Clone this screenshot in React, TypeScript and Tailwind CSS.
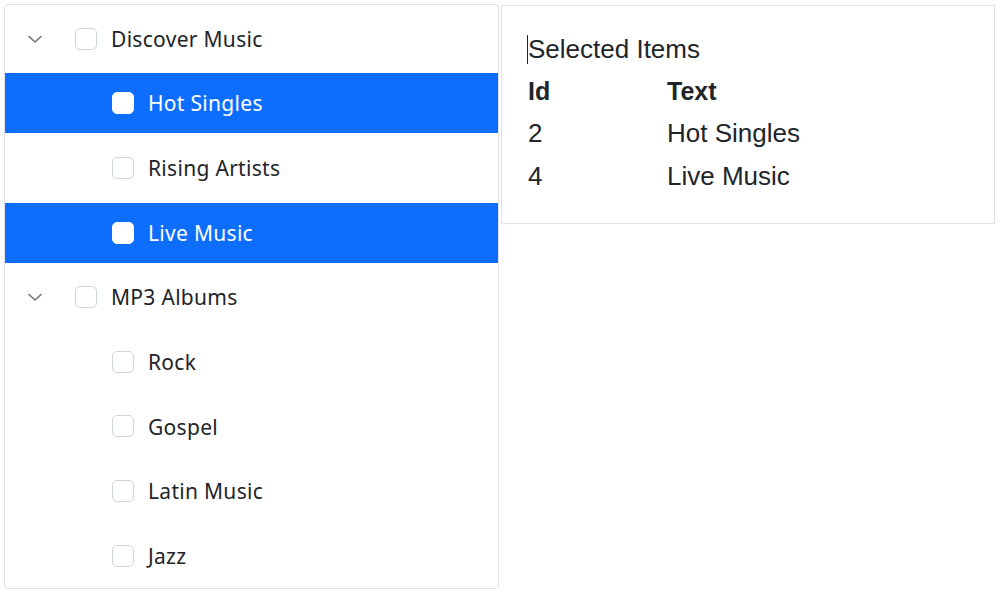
import React from "react";

type Item = { id: number; text: string; level: number; expandable?: boolean; selected?: boolean };

const items: Item[] = [
  { id: 1, text: "Discover Music", level: 0, expandable: true },
  { id: 2, text: "Hot Singles", level: 1, selected: true },
  { id: 3, text: "Rising Artists", level: 1 },
  { id: 4, text: "Live Music", level: 1, selected: true },
  { id: 5, text: "MP3 Albums", level: 0, expandable: true },
  { id: 6, text: "Rock", level: 1 },
  { id: 7, text: "Gospel", level: 1 },
  { id: 8, text: "Latin Music", level: 1 },
  { id: 9, text: "Jazz", level: 1 },
];

function Chevron() {
  return (
    <svg width="18" height="18" viewBox="0 0 18 18" fill="none">
      <path d="M3 6.5 L9 12 L15 6.5" stroke="#6c757d" strokeWidth="1.6" strokeLinecap="round" strokeLinejoin="round" />
    </svg>
  );
}

export default function App() {
  return (
    <div className="flex items-start bg-white w-[997px] h-[594px] pl-[4px] pt-[4px]">
      <div
        className="w-[495px] h-[585px] border border-[#dee2e6] rounded-[4px] flex flex-col gap-[4.65px] pt-[3.6px] overflow-hidden"
        style={{ fontFamily: '"Noto Sans", "Open Sans", sans-serif' }}
      >
        {items.map((it) => (
          <div
            key={it.id}
            className={
              "h-[60px] shrink-0 flex items-center text-[21px] tracking-[0.3px] " +
              (it.selected ? "bg-[#0d6efd] text-white" : "text-[#212529]")
            }
          >
            {it.level === 0 ? (
              <>
                <div className="w-[60px] flex justify-center">
                  <Chevron />
                </div>
                <div className="ml-[10px] w-[22px] h-[22px] rounded-[5px] border border-[#ced4da] bg-white" />
                <span className="ml-[14px] pt-[2px]">{it.text}</span>
              </>
            ) : (
              <>
                <div
                  className={
                    "ml-[107px] w-[22px] h-[22px] rounded-[5px] bg-white " +
                    (it.selected ? "border border-white" : "border border-[#ced4da]")
                  }
                />
                <span className="ml-[14px] pt-[2px]">{it.text}</span>
              </>
            )}
          </div>
        ))}
      </div>
      <div
        className="ml-[2px] mt-[1px] w-[494px] h-[219px] border border-[#dee2e6] pl-[25px] pt-[23px] text-[#212529]"
        style={{ fontFamily: '"Liberation Sans", Arial, sans-serif' }}
      >
        <div className="flex items-center h-[40px] text-[26px]">
          <span className="w-[1px] h-[29px] bg-[#212529]" />
          <span>Selected Items</span>
        </div>
        <div className="grid grid-cols-[139px_1fr] text-[25px] font-bold leading-[42px] mt-[1px] pl-[1px]">
          <div>Id</div>
          <div>Text</div>
        </div>
        <div className="grid grid-cols-[139px_1fr] text-[26px] leading-[43px] pl-[1px]">
          <div>2</div>
          <div>Hot Singles</div>
          <div>4</div>
          <div>Live Music</div>
        </div>
      </div>
    </div>
  );
}
